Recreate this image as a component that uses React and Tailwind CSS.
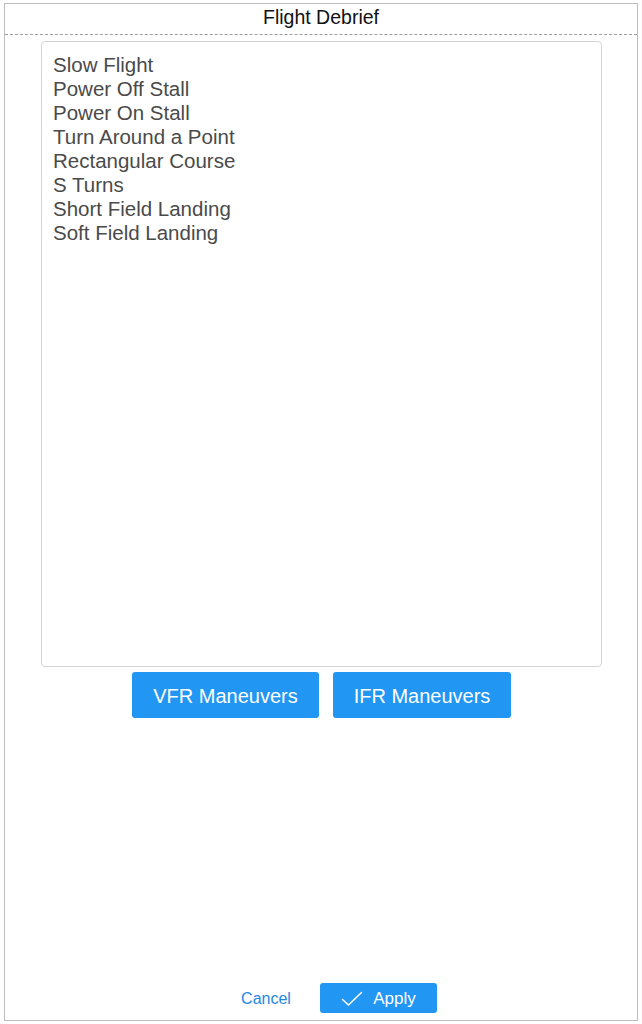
import React from "react";

const items = [
  "Slow Flight",
  "Power Off Stall",
  "Power On Stall",
  "Turn Around a Point",
  "Rectangular Course",
  "S Turns",
  "Short Field Landing",
  "Soft Field Landing",
];

export default function App() {
  return (
    <div className="w-[642px] h-[1024px] bg-white pt-[3px] pl-[4px]" style={{ fontFamily: '"Liberation Sans", Arial, sans-serif' }}>
      <div className="w-[634px] h-[1018px] border border-[#bdbdbd] flex flex-col">
        <div className="h-[31px] border-b border-dashed border-[#9e9e9e] flex items-center justify-center text-[19.5px] text-[#111] leading-none pb-[3px]">
          Flight Debrief
        </div>
        <div className="ml-[36px] mt-[6px] w-[561px] h-[626px] border border-[#d4d4d4] rounded-[4px] px-[11px] pt-[11px]">
          {items.map((t) => (
            <div key={t} className="text-[20.5px] leading-[24px] text-[#4a4a4a]">
              {t}
            </div>
          ))}
        </div>
        <div className="mt-[5px] flex justify-center gap-[14px] pl-[1px]">
          <button className="w-[187px] h-[46px] rounded-[3px] bg-[#2196f3] text-white text-[20px] pt-[1px]">
            VFR Maneuvers
          </button>
          <button className="w-[178px] h-[46px] rounded-[3px] bg-[#2196f3] text-white text-[20px] pt-[1px]">
            IFR Maneuvers
          </button>
        </div>
        <div className="flex-1" />
        <div className="h-[30px] mb-[7px] flex items-center pl-[235px]">
          <button className="w-[52px] text-[16px] text-[#1e88e5] text-center pt-[1px]">Cancel</button>
          <button className="ml-[28px] w-[117px] h-[30px] rounded-[3px] bg-[#2196f3] text-white text-[17px] flex items-center justify-center gap-[10px] pt-[1px]">
            <svg width="22" height="16" viewBox="0 0 22 16" fill="none" stroke="white" strokeWidth="1.6" strokeLinecap="round" strokeLinejoin="round">
              <path d="M1.5 8.5 L7.5 14 L20.5 1.5" />
            </svg>
            <span>Apply</span>
          </button>
        </div>
      </div>
    </div>
  );
}
